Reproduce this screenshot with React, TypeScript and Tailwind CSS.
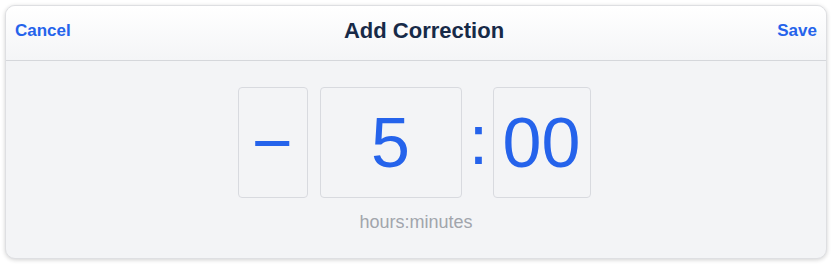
import React from 'react';

const font = { fontFamily: '"Liberation Sans", Arial, sans-serif' };

const App: React.FC = () => {
  return (
    <div className="w-[833px] h-[264px] bg-white pt-[5px] pl-[5px]" style={font}>
      <div className="w-[822px] h-[254px] rounded-[10px] border border-[#dedfe2] bg-[#f3f4f6] shadow-[0_1px_4px_rgba(0,0,0,0.18)] overflow-hidden flex flex-col">
        <div className="h-[55px] shrink-0 flex items-center justify-between px-[9px] pb-[5px] border-b border-[#d5d7db] bg-gradient-to-b from-white to-[#f4f5f7]">
          <button className="text-[17px] font-bold text-[#2563eb]">Cancel</button>
          <h1 className="text-[22px] font-bold text-[#172a48]">Add Correction</h1>
          <button className="text-[17px] font-bold text-[#2563eb]">Save</button>
        </div>
        <div className="flex flex-col items-center pt-[26px]">
          <div className="flex items-stretch h-[111px] mr-[4px] text-[70px] text-[#2563eb] leading-none">
            <div className="w-[70px] rounded-[4px] border border-[#d8dadf] flex items-center justify-center">
              −
            </div>
            <div className="w-[142px] ml-[12px] rounded-[4px] border border-[#d8dadf] flex items-center justify-center">
              5
            </div>
            <div className="w-[31px] flex items-center justify-center pb-[6px] pl-[3px]">:</div>
            <div className="w-[98px] rounded-[4px] border border-[#d8dadf] flex items-center justify-center">
              00
            </div>
          </div>
          <div className="mt-[14px] text-[18px] leading-[21px] text-[#a1a5ac]">hours:minutes</div>
        </div>
      </div>
    </div>
  );
};

export default App;
